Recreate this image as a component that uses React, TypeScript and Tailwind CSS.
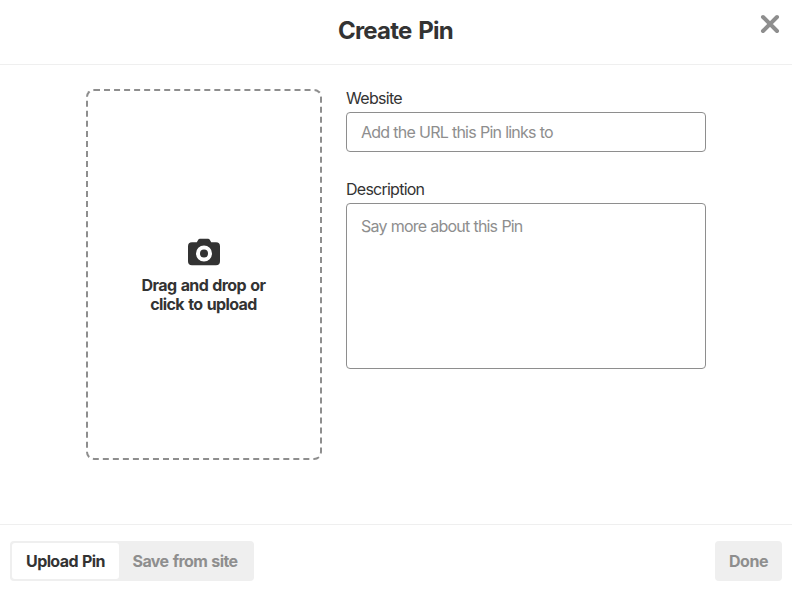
import React from 'react';

const CloseIcon = () => (
  <svg viewBox="0 0 20 20" className="h-5 w-5" fill="none" stroke="#8e8e8e" strokeWidth="4" strokeLinecap="round">
    <path d="M3 3l14 14M17 3L3 17" />
  </svg>
);

const CameraIcon = () => (
  <svg viewBox="0 0 32 28" className="h-7 w-8" fill="#333333">
    <path
      fillRule="evenodd"
      d="M12 0.7h8c.9 0 1.5.4 1.9 1.2l1.3 2.4H28a4 4 0 0 1 4 4V23.3a4 4 0 0 1-4 4H4a4 4 0 0 1-4-4V8.300a4 4 0 0 1 4-4h4.800l1.300-2.400C10.500 1.100 11.100.7 12 .7zM16 7.500a8 8 0 1 0 0 16 8 8 0 0 0 0-16z"
    />
    <circle cx="16" cy="15.500" r="4" />
  </svg>
);

const UploadArea = () => (
  <div className="flex h-[371px] w-[236px] flex-col items-center rounded-lg border-2 border-dashed border-[#8e8e8e] pt-[147px]">
    <CameraIcon />
    <p className="mt-[10px] mr-px text-center text-base leading-[19px] font-bold tracking-[-0.6px] [word-spacing:1px]">
      Drag and drop or
      <br />
      click to upload
    </p>
  </div>
);

const fieldClass =
  'block w-full resize-none rounded border border-[#8e8e8e] bg-white px-[14px] text-base tracking-[-0.82px] [word-spacing:0.5px] placeholder:text-[#8e8e8e] outline-none';

const PinForm = () => (
  <div className="w-[360px]">
    <label htmlFor="website" className="block h-[23px] text-base leading-[19px] tracking-[-0.7px]">
      Website
    </label>
    <input id="website" className={`${fieldClass} h-10`} placeholder="Add the URL this Pin links to" />
    <label htmlFor="description" className="mt-7 block h-[23px] text-base leading-[19px] tracking-[-0.75px]">
      Description
    </label>
    <textarea
      id="description"
      className={`${fieldClass} h-[166px] py-[13px] leading-[19px]`}
      placeholder="Say more about this Pin"
    />
  </div>
);

const App: React.FC = () => {
  return (
    <div className="flex h-screen w-full flex-col overflow-hidden bg-white font-['Inter','Liberation_Sans',sans-serif] text-[#333333]">
      <header className="grid h-[65px] shrink-0 grid-cols-[1fr_auto_1fr] border-b border-[#efefef]">
        <h1 className="col-start-2 pt-[15px] pr-px text-2xl leading-8 font-bold tracking-[-0.8px] [word-spacing:2px]">
          Create Pin
        </h1>
        <button aria-label="Close" className="mt-[14px] mr-3 h-5 w-5 justify-self-end">
          <CloseIcon />
        </button>
      </header>

      <main className="flex h-[459px] shrink-0 justify-center gap-6 pt-6">
        <UploadArea />
        <PinForm />
      </main>

      <footer className="flex flex-1 items-start justify-between border-t border-[#efefef] px-[10px] pt-4 text-base font-bold tracking-[-0.6px]">
        <div className="flex h-10 w-[244px] rounded bg-[#efefef] p-0.5">
          <button className="w-[107px] rounded-[3px] bg-white whitespace-nowrap [word-spacing:1px]">Upload Pin</button>
          <button className="flex-1 pr-px whitespace-nowrap text-[#8e8e8e] [word-spacing:1px]">Save from site</button>
        </div>
        <button className="h-10 w-[67px] rounded bg-[#efefef] tracking-[-0.5px] text-[#8e8e8e]">Done</button>
      </footer>
    </div>
  );
};

export default App;
